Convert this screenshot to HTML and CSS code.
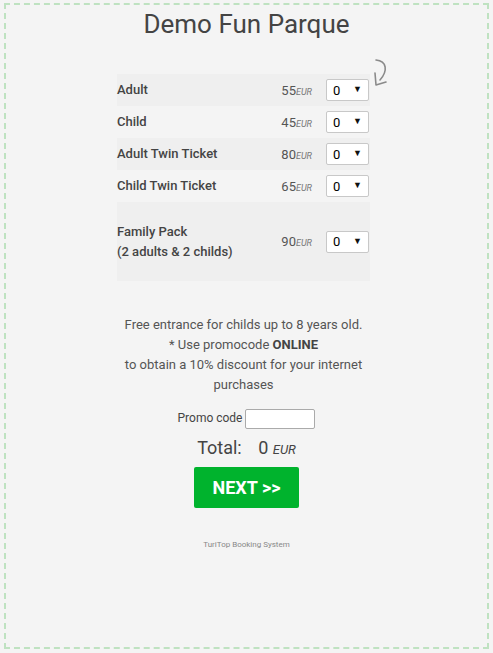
FILE: index.html
```html
<!DOCTYPE html>
<html lang="en">
<head>
    <meta charset="UTF-8">
    <meta name="viewport" content="width=device-width, initial-scale=1.0">
    <title>Demo Fun Parque</title>
    <link rel="stylesheet" href="styles.css">
</head>
<body>

    <div class="frame">
        <h1>Demo Fun Parque</h1>

        <div class="tickets">
            <svg class="hint-arrow" width="18" height="30" viewBox="0 0 18 30">
                <path d="M4 2 C 15 3, 16 13, 8 22" fill="none" stroke="#8a8a8a" stroke-width="1.6" stroke-linecap="round"/>
                <path d="M3 15 L 4 27 L 14 24" fill="none" stroke="#8a8a8a" stroke-width="1.6" stroke-linecap="round" stroke-linejoin="round"/>
            </svg>

            <div class="ticket-row odd">
                <span class="ticket-name">Adult</span>
                <span class="price">55<i>EUR</i></span>
                <span class="qty"><select><option>0</option></select></span>
            </div>
            <div class="ticket-row">
                <span class="ticket-name">Child</span>
                <span class="price">45<i>EUR</i></span>
                <span class="qty"><select><option>0</option></select></span>
            </div>
            <div class="ticket-row odd">
                <span class="ticket-name">Adult Twin Ticket</span>
                <span class="price">80<i>EUR</i></span>
                <span class="qty"><select><option>0</option></select></span>
            </div>
            <div class="ticket-row">
                <span class="ticket-name">Child Twin Ticket</span>
                <span class="price">65<i>EUR</i></span>
                <span class="qty"><select><option>0</option></select></span>
            </div>
            <div class="ticket-row odd tall">
                <span class="ticket-name">Family Pack<br>(2 adults &amp; 2 childs)</span>
                <span class="price">90<i>EUR</i></span>
                <span class="qty"><select><option>0</option></select></span>
            </div>
        </div>

        <p class="notice">
            Free entrance for childs up to 8 years old.<br>
            * Use promocode <strong>ONLINE</strong><br>
            to obtain a 10% discount for your internet purchases
        </p>

        <div class="promo">
            <label for="promoCode">Promo code</label>
            <input type="text" id="promoCode">
        </div>

        <div class="total">
            Total: <span class="total-value">0</span> <i>EUR</i>
        </div>

        <button class="next-button">NEXT &gt;&gt;</button>

        <p class="powered">TuriTop Booking System</p>
    </div>

</body>
</html>
```

FILE: styles.css
```css
/* General Styles */
body {
    font-family: Roboto, "Liberation Sans", sans-serif;
    background-color: #f4f4f4;
    margin: 0;
    padding: 0;
    color: #444;
}

.frame {
    box-sizing: border-box;
    width: 485px;
    height: 646px;
    margin: 3px 0 0 4px;
    border: 2px dashed #bfe2c1;
    text-align: center;
}

h1 {
    font-size: 26px;
    font-weight: 400;
    color: #444;
    margin: 0;
    padding-top: 2px;
    line-height: 34px;
}

/* Tickets */
.tickets {
    position: relative;
    width: 253px;
    margin: 33px 0 0 111px;
    text-align: left;
}

.hint-arrow {
    position: absolute;
    right: -20px;
    top: -16px;
}

.ticket-row {
    display: flex;
    align-items: center;
    height: 32px;
}

.ticket-row.odd {
    background-color: #efefef;
}

.ticket-row.tall {
    height: 79px;
}

.ticket-name {
    flex: 1;
    font-size: 13px;
    font-weight: 500;
    line-height: 20px;
    color: #444;
}

.price {
    font-size: 13px;
    color: #555;
    margin-right: 14px;
}

.price i {
    font-size: 9px;
    color: #777;
}

.qty {
    position: relative;
    margin-right: 1px;
}

.qty select {
    appearance: none;
    -webkit-appearance: none;
    box-sizing: border-box;
    width: 43px;
    height: 22px;
    padding: 0 0 0 6px;
    border: 1px solid #c8c8c8;
    border-radius: 2px;
    background-color: #fff;
    font-family: Roboto, "Liberation Sans", sans-serif;
    font-size: 13px;
    color: #000;
}

.qty::after {
    content: "\25BC";
    position: absolute;
    right: 7px;
    top: 5px;
    font-size: 9px;
    color: #111;
    pointer-events: none;
}

/* Notice */
.notice {
    width: 253px;
    margin: 34px 0 0 111px;
    font-size: 13px;
    line-height: 20px;
    color: #555;
}

.notice strong {
    color: #444;
}

/* Promo */
.promo {
    margin-top: 14px;
    font-size: 12px;
    color: #444;
}

.promo input {
    box-sizing: border-box;
    width: 70px;
    height: 20px;
    border: 1px solid #aaa;
    border-radius: 2px;
    background-color: #fff;
    vertical-align: middle;
}

.total {
    margin-top: 8px;
    font-size: 18px;
    color: #444;
}

.total-value {
    margin-left: 12px;
}

.total i {
    font-size: 13px;
}

.next-button {
    margin-top: 9px;
    width: 105px;
    height: 41px;
    border: none;
    border-radius: 2px;
    background-color: #00b32d;
    color: #fff;
    font-family: Roboto, "Liberation Sans", sans-serif;
    font-size: 18px;
    font-weight: 700;
    cursor: pointer;
}

.powered {
    margin-top: 32px;
    font-size: 8px;
    color: #888;
}
```
